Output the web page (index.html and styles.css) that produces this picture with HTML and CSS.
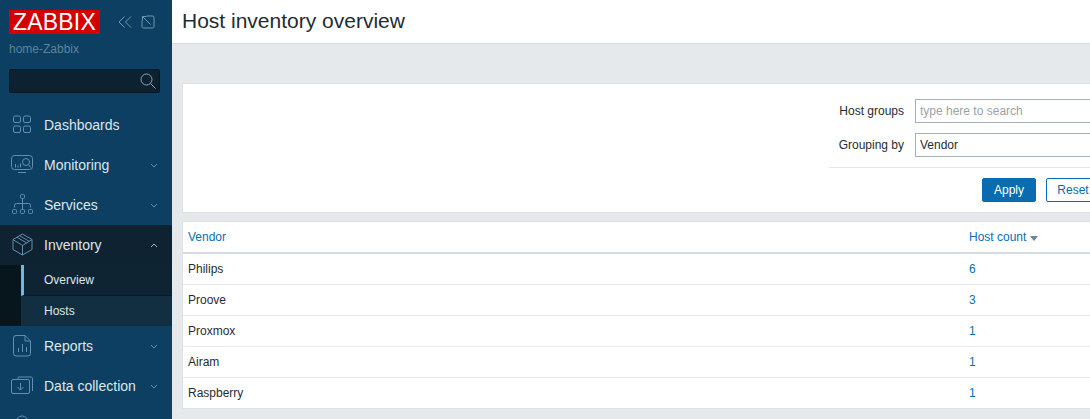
FILE: index.html
```html
<!DOCTYPE html>
<html lang="en">
<head>
<meta charset="utf-8">
<title>Host inventory overview</title>
<link rel="stylesheet" href="styles.css">
</head>
<body>
<aside class="sidebar">
  <div class="brand">
    <span class="logo">ZABBIX</span>
    <svg class="tool" width="14" height="14" viewBox="0 0 14 14"><path d="M6.500 1.500 1 7l5.500 5.500M13 1.500 7.500 7l5.500 5.500"/></svg>
    <svg class="tool tool-b" width="14" height="14" viewBox="0 0 14 14"><path d="M5.500 1h6A1.500 1.500 0 0 1 13 2.500v9a1.500 1.500 0 0 1-1.500 1.500h-9A1.500 1.500 0 0 1 1 11.500v-6M1.500 1.500l8 8M1.500 5.500v-4h4"/></svg>
  </div>
  <div class="server">home-Zabbix</div>
  <div class="search">
    <svg width="16" height="16" viewBox="0 0 16 16"><circle cx="6.500" cy="6.500" r="5.500"/><path d="m10.500 10.500 5 5"/></svg>
  </div>
  <nav class="menu">
    <a class="item">
      <svg class="ic" width="24" height="24" viewBox="0 0 24 24"><rect x="3.500" y="3" width="7" height="6.500" rx="1.500"/><rect x="13.500" y="3" width="7" height="6.500" rx="1.500"/><rect x="3.500" y="13" width="7" height="6.500" rx="1.500"/><rect x="13.500" y="13" width="7" height="6.500" rx="1.500"/></svg>
      <span>Dashboards</span>
    </a>
    <a class="item">
      <svg class="ic" width="24" height="24" viewBox="0 0 24 24"><rect x="1.500" y="2.500" width="21" height="14" rx="3"/><path d="M8 19.500h8M5.500 14.500v-3.500M8 14.500v-2M10.500 14.500v-4"/><circle cx="16" cy="9" r="3.500"/><path d="m18.500 11.500 2.200 3"/></svg>
      <span>Monitoring</span>
      <svg class="chev" width="8" height="5" viewBox="0 0 8 5"><path d="m1 1 3 3 3-3"/></svg>
    </a>
    <a class="item">
      <svg class="ic" width="24" height="24" viewBox="0 0 24 24"><rect x="10.500" y="1.500" width="4" height="4" rx="1"/><rect x="2.500" y="16.500" width="4" height="4" rx="1"/><rect x="10.500" y="16.500" width="4" height="4" rx="1"/><rect x="18.500" y="16.500" width="4" height="4" rx="1"/><path d="M12.500 5.500v11M4.500 14.500v-2a2 2 0 0 1 2-2h12a2 2 0 0 1 2 2v2"/></svg>
      <span>Services</span>
      <svg class="chev" width="8" height="5" viewBox="0 0 8 5"><path d="m1 1 3 3 3-3"/></svg>
    </a>
    <a class="item open">
      <svg class="ic" width="24" height="24" viewBox="0 0 24 24"><path d="M12.500 1 22 6.500v10L12.500 22 3 16.500v-10zM3 6.500l9.500 6 9.500-6M12.500 12.500V22M6.800 4.200l9.700 5.600M9.600 2.700l9.600 5.600"/></svg>
      <span>Inventory</span>
      <svg class="chev" width="8" height="5" viewBox="0 0 8 5"><path d="m1 4 3-3 3 3"/></svg>
    </a>
    <div class="sub">
      <a class="sub-item active">Overview</a>
      <a class="sub-item">Hosts</a>
    </div>
    <a class="item">
      <svg class="ic" width="24" height="24" viewBox="0 0 24 24"><path d="M6 1.500h9l5.500 5.500v12.500a2.500 2.500 0 0 1-2.500 2.500H6a2.500 2.500 0 0 1-2.500-2.500V4A2.500 2.500 0 0 1 6 1.500zM15 1.500V7h5.500M8.500 18v-4M12.500 18v-8M16.500 18v-5"/></svg>
      <span>Reports</span>
      <svg class="chev" width="8" height="5" viewBox="0 0 8 5"><path d="m1 1 3 3 3-3"/></svg>
    </a>
    <a class="item">
      <svg class="ic" width="24" height="24" viewBox="0 0 24 24"><rect x="1.500" y="5.500" width="18" height="14" rx="1.500"/><path d="M8 5.500V4a1 1 0 0 1 1-1h12a1.500 1.500 0 0 1 1.500 1.500V17M10.500 9v7M7.500 13l3 3 3-3"/></svg>
      <span>Data collection</span>
      <svg class="chev" width="8" height="5" viewBox="0 0 8 5"><path d="m1 1 3 3 3-3"/></svg>
    </a>
    <a class="item">
      <svg class="ic" width="24" height="24" viewBox="0 0 24 24"><circle cx="12" cy="8" r="6"/></svg>
    </a>
  </nav>
</aside>
<main class="main">
  <header class="head"><h1>Host inventory overview</h1></header>
  <div class="content">
    <section class="panel filter">
      <div class="form">
        <div class="row">
          <label class="lbl">Host groups</label>
          <div class="field placeholder">type here to search</div>
        </div>
        <div class="row">
          <label class="lbl">Grouping by</label>
          <div class="field">Vendor</div>
        </div>
        <div class="actions">
          <button class="btn primary">Apply</button>
          <button class="btn">Reset</button>
        </div>
      </div>
    </section>
    <section class="panel list">
      <table>
        <thead>
          <tr><th class="c1"><a>Vendor</a></th><th><a>Host count</a><span class="sort"></span></th></tr>
        </thead>
        <tbody>
          <tr><td>Philips</td><td><a>6</a></td></tr>
          <tr><td>Proove</td><td><a>3</a></td></tr>
          <tr><td>Proxmox</td><td><a>1</a></td></tr>
          <tr><td>Airam</td><td><a>1</a></td></tr>
          <tr><td>Raspberry</td><td><a>1</a></td></tr>
        </tbody>
      </table>
    </section>
  </div>
</main>
</body>
</html>
```

FILE: styles.css
```css
* { box-sizing: border-box; }
html, body { height: 100%; }
body {
  margin: 0;
  display: flex;
  overflow: hidden;
  font-family: "Liberation Sans", Arial, sans-serif;
  font-size: 12px;
  color: #1f2c33;
  background: #e5e9ec;
}
a { color: #0a6eb4; text-decoration: none; }

.sidebar {
  flex: 0 0 172px;
  width: 172px;
  height: 419px;
  overflow: hidden;
  background: #0c3f62;
  color: #dfe6ea;
}
.brand { display: flex; align-items: center; padding: 10px 0 0 9px; height: 34px; }
.logo {
  width: 91px;
  height: 24px;
  background: #d40000;
  color: #fff;
  font-size: 23px;
  line-height: 24px;
  text-align: center;
  letter-spacing: 0.2px;
}
.tool { margin-left: 18px; fill: none; stroke: #6f96ad; stroke-width: 1; }
.tool-b { margin-left: 9px; }
.server { margin: 8px 0 0 9px; height: 14px; line-height: 14px; font-size: 12px; color: #5f8299; }
.search {
  margin: 13px 12px 0 9px;
  height: 24px;
  background: #0c2231;
  border: 1px solid #071620;
  border-radius: 2px;
  display: flex;
  align-items: center;
  justify-content: flex-end;
  padding-right: 3px;
}
.search svg { fill: none; stroke: #8aa5b5; stroke-width: 1; }
.menu { margin-top: 12px; }
.item {
  display: flex;
  align-items: center;
  height: 40px;
  padding-left: 10px;
  font-size: 14px;
  color: #dfe6ea;
}
.item span { margin-left: 10px; }
.ic { flex: none; fill: none; stroke: #5f90b0; stroke-width: 1; }
.chev { margin-left: auto; margin-right: 14px; fill: none; stroke: #5d8aa6; stroke-width: 1; }
.open { background: #0f2231; }
.open .chev { stroke: #9fb3bf; }
.sub { background: #07151d; padding-left: 21px; }
.sub-item {
  display: flex;
  align-items: center;
  height: 30px;
  padding-left: 23px;
  font-size: 12px;
  color: #dfe6ea;
  background: #122f42;
}
.active { background: #0f2433; border-left: 3px solid #6db8ea; padding-left: 20px; height: 31px; border-bottom: 1px solid #081a26; }

.main { flex: 1; min-width: 0; overflow: hidden; }
.head { height: 44px; background: #fff; border-bottom: 1px solid #d5dbe0; padding-left: 10px; }
h1 { margin: 0; font-size: 21px; font-weight: 400; line-height: 42px; color: #1f2c33; }
.content { width: 1011px; padding: 39px 0 0 10px; }
.panel { background: #fff; border: 1px solid #dde2e6; }
.filter { height: 130px; display: flex; justify-content: flex-end; }
.form { width: 353px; padding-top: 15px; }
.row { display: flex; align-items: center; height: 24px; margin-bottom: 10px; }
.lbl { width: 75px; text-align: right; margin-right: 11px; }
.field {
  flex: 1;
  height: 24px;
  border: 1px solid #a3b1bb;
  padding: 0 4px;
  line-height: 22px;
  color: #1f2c33;
}
.placeholder { color: #9aa3a9; }
.actions { border-top: 1px solid #e5e9ec; padding: 10px 0 0 153px; display: flex; gap: 10px; }
.btn {
  width: 54px;
  height: 24px;
  padding: 0;
  font: inherit;
  border-radius: 2px;
  background: #fff;
  border: 1px solid #0a6cb0;
  color: #0a6cb0;
}
.primary { background: #0a6cb0; color: #fff; }
.list { margin-top: 8px; height: 188px; }
table { width: 100%; border-collapse: collapse; table-layout: fixed; }
th, td { padding: 0 5px; text-align: left; font-weight: 400; }
.c1 { width: 781px; }
th { height: 31px; border-bottom: 2px solid #d5dbe0; }
td { height: 31px; border-bottom: 1px solid #e5e9ec; }
tbody tr:last-child td { border-bottom: 0; }
.sort {
  display: inline-block;
  margin-left: 4px;
  border-left: 4px solid transparent;
  border-right: 4px solid transparent;
  border-top: 5px solid #6f8493;
}
```
